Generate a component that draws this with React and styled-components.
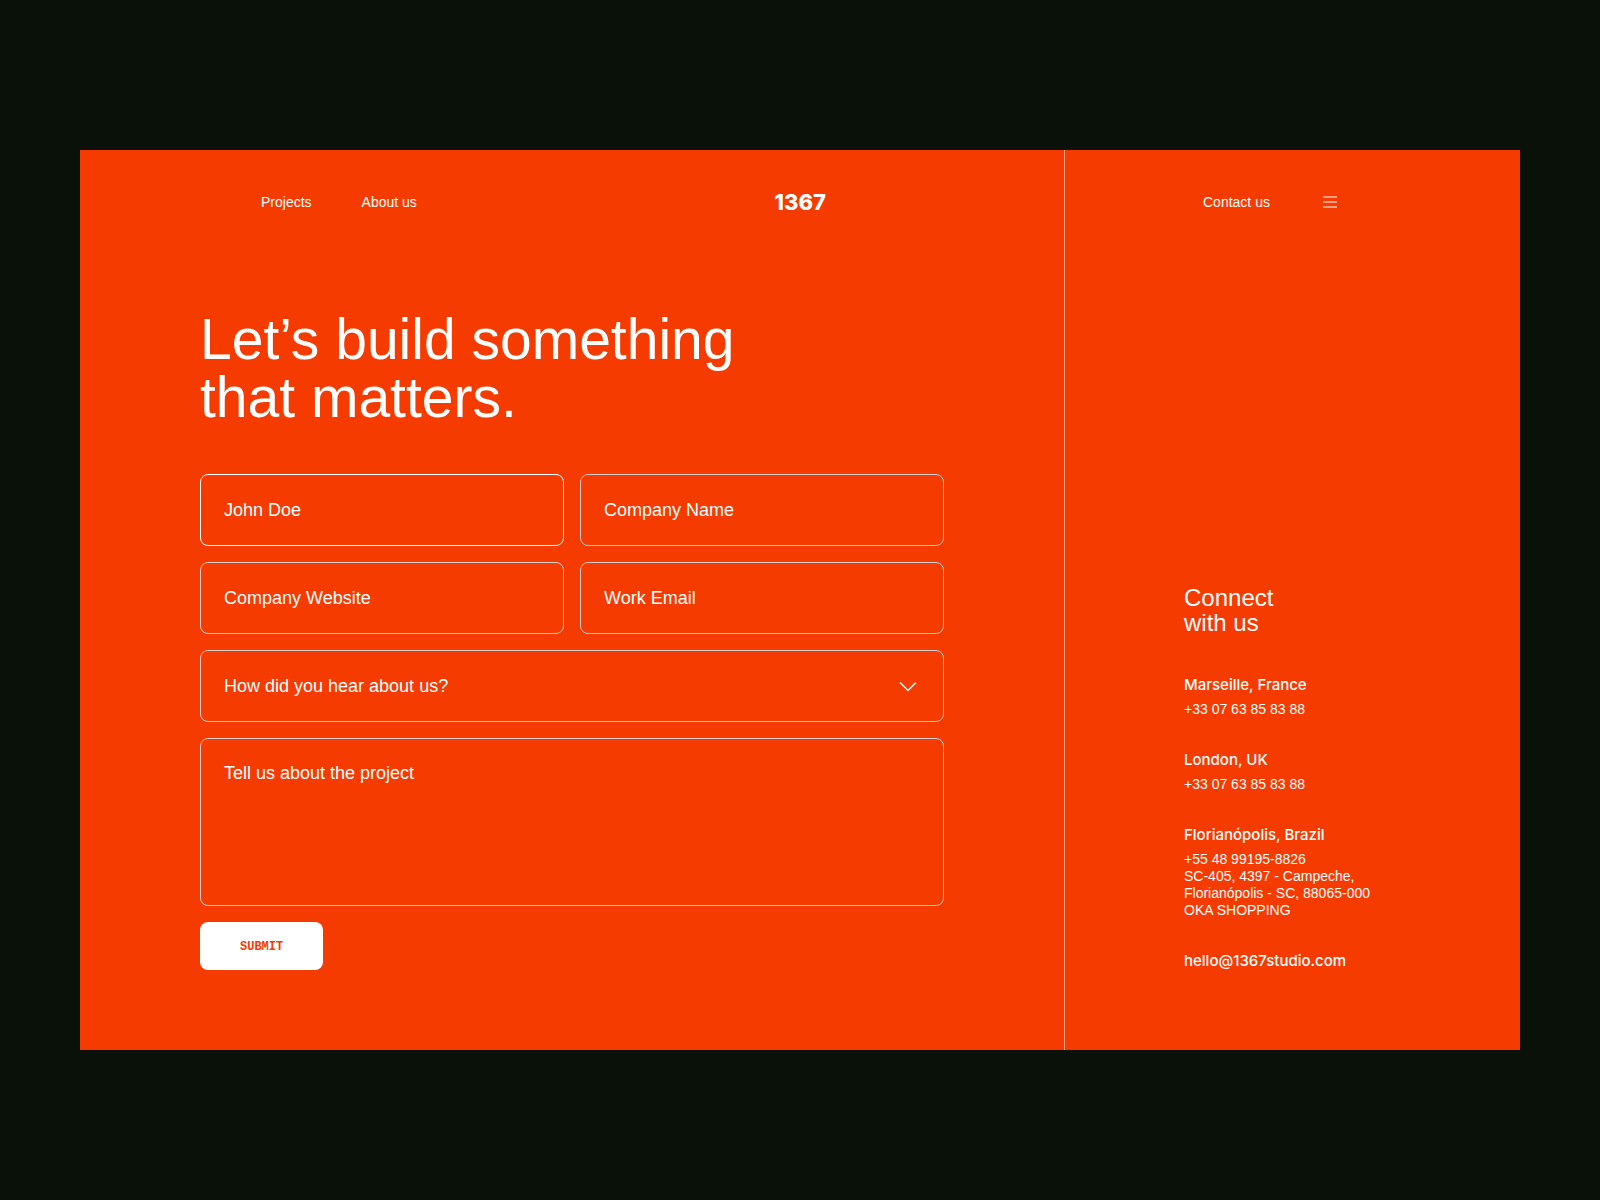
import React from "react";
import styled, { createGlobalStyle } from "styled-components";

const GlobalStyle = createGlobalStyle`
  *, *::before, *::after { box-sizing: border-box; }
  body {
    margin: 0;
    background: #0a1109;
    color: #fff;
    font-family: "Liberation Sans", Arial, sans-serif;
  }
  h1, h2, h3, p { margin: 0; font-weight: 400; }
  a { color: inherit; text-decoration: none; }
`;

const Page = styled.div`
  min-height: 100vh;
  padding: 80px;
  display: flex;
  align-items: center;
`;

const Panel = styled.div`
  flex: 1;
  min-height: 900px;
  display: grid;
  grid-template-columns: minmax(0, 984fr) minmax(0, 456fr);
  background: #f53b00;
`;

const Column = styled.div`
  display: flex;
  flex-direction: column;
  justify-content: space-between;
  padding: 40px 120px 80px;
`;

const Side = styled(Column)`
  border-left: 1px solid rgba(255, 255, 255, 0.5);
  padding: 40px 40px 79px 119px;
`;

const Bar = styled.header`
  display: flex;
  align-items: center;
  justify-content: space-between;
  height: 24px;
  padding: 0 118px 0 61px;
`;

const SideBar = styled.div`
  display: flex;
  align-items: center;
  gap: 51px;
  height: 24px;
  padding-left: 19px;
`;

const Nav = styled.nav`
  display: flex;
  gap: 50px;
`;

const NavLink = styled.a`
  font-size: 14px;
  line-height: 20px;
  white-space: nowrap;
`;

const Logo = styled.a`
  font-family: Inter, sans-serif;
  font-size: 22px;
  line-height: 24px;
  font-weight: 800;
`;

const MenuButton = styled.button`
  display: flex;
  padding: 2px;
  border: 0;
  background: none;
  color: rgba(255, 255, 255, 0.5);
  cursor: pointer;
`;

const Title = styled.h1`
  margin-bottom: 48px;
  font-size: 57px;
  line-height: 58px;
`;

const TitleLine = styled.span`
  display: block;
`;

const Form = styled.form`
  display: grid;
  grid-template-columns: repeat(2, minmax(0, 1fr));
  gap: 16px;
`;

const control = `
  display: block;
  width: 100%;
  margin: 0;
  border: 1px solid #d2cdca;
  border-radius: 8px;
  background: transparent;
  color: #fff;
  font-family: inherit;
  font-size: 18px;
  line-height: 24px;
  outline: none;
  &::placeholder { color: #fff; opacity: 1; }
  &:focus { border-color: #fff; }
`;

const Input = styled.input`
  ${control}
  height: 72px;
  padding: 0 23px;
  ${(p) => p.$filled && "border-color: #fff;"}
`;

const SelectBox = styled.div`
  position: relative;
  grid-column: 1 / -1;
`;

const Select = styled.select`
  ${control}
  appearance: none;
  height: 72px;
  padding: 0 64px 0 23px;
  option { color: #0a1109; }
`;

const Chevron = styled.svg`
  position: absolute;
  top: 24px;
  right: 24px;
  pointer-events: none;
`;

const TextArea = styled.textarea`
  ${control}
  grid-column: 1 / -1;
  height: 168px;
  padding: 22px 23px;
  resize: none;
`;

const Submit = styled.button`
  justify-self: start;
  height: 48px;
  padding: 2px 40px 0;
  border: 0;
  border-radius: 8px;
  background: #fff;
  color: #f53b00;
  font-family: "Liberation Mono", monospace;
  font-size: 12px;
  font-weight: 700;
  cursor: pointer;
`;

const Contacts = styled.div`
  display: flex;
  flex-direction: column;
  gap: 32px;
`;

const SideTitle = styled.h2`
  margin-bottom: 8px;
  font-size: 24px;
  line-height: 25px;
`;

const Office = styled.section`
  display: flex;
  flex-direction: column;
  gap: 6px;
`;

const City = styled.h3`
  font-family: Inter, sans-serif;
  font-size: 15px;
  line-height: 20px;
  font-weight: 500;
`;

const Details = styled.address`
  font-size: 14px;
  line-height: 17px;
  font-style: normal;
`;

const Line = styled.div`
  white-space: nowrap;
`;

const Email = styled.a`
  font-family: Inter, sans-serif;
  font-size: 15px;
  line-height: 20px;
  font-weight: 500;
`;

const offices = [
  { city: "Marseille, France", lines: ["+33 07 63 85 83 88"] },
  { city: "London, UK", lines: ["+33 07 63 85 83 88"] },
  {
    city: "Florianópolis, Brazil",
    lines: [
      "+55 48 99195-8826",
      "SC-405, 4397 - Campeche,",
      "Florianópolis - SC, 88065-000",
      "OKA SHOPPING",
    ],
  },
];

export default function App() {
  return (
    <Page>
      <GlobalStyle />
      <Panel>
        <Column>
          <Bar>
            <Nav>
              <NavLink href="#projects">Projects</NavLink>
              <NavLink href="#about">About us</NavLink>
            </Nav>
            <Logo href="#home">1367</Logo>
          </Bar>
          <main>
            <Title>
              <TitleLine>Let’s build something</TitleLine>
              <TitleLine>that matters.</TitleLine>
            </Title>
            <Form onSubmit={(e) => e.preventDefault()}>
              <Input $filled aria-label="Name" name="name" defaultValue="John Doe" />
              <Input aria-label="Company Name" name="company" placeholder="Company Name" />
              <Input aria-label="Company Website" name="website" placeholder="Company Website" />
              <Input aria-label="Work Email" name="email" type="email" placeholder="Work Email" />
              <SelectBox>
                <Select aria-label="How did you hear about us?" name="source" defaultValue="">
                  <option value="">How did you hear about us?</option>
                </Select>
                <Chevron width="24" height="24" viewBox="0 0 24 24" fill="none" aria-hidden="true">
                  <path d="M4 8.5l8 8 8-8" stroke="#fff" strokeWidth="1.5" />
                </Chevron>
              </SelectBox>
              <TextArea
                aria-label="Tell us about the project"
                name="project"
                placeholder="Tell us about the project"
              />
              <Submit type="submit">SUBMIT</Submit>
            </Form>
          </main>
        </Column>
        <Side as="aside">
          <SideBar>
            <NavLink href="#contact">Contact us</NavLink>
            <MenuButton type="button" aria-label="Menu">
              <svg width="14" height="12" viewBox="0 0 14 12" aria-hidden="true">
                <path d="M0 1h14M0 6h14M0 11h14" stroke="currentColor" strokeWidth="2" />
              </svg>
            </MenuButton>
          </SideBar>
          <Contacts>
            <SideTitle>
              <TitleLine>Connect</TitleLine>
              <TitleLine>with us</TitleLine>
            </SideTitle>
            {offices.map((office) => (
              <Office key={office.city}>
                <City>{office.city}</City>
                <Details>
                  {office.lines.map((line) => (
                    <Line key={line}>{line}</Line>
                  ))}
                </Details>
              </Office>
            ))}
            <Email href="mailto:hello@1367studio.com">hello@1367studio.com</Email>
          </Contacts>
        </Side>
      </Panel>
    </Page>
  );
}
